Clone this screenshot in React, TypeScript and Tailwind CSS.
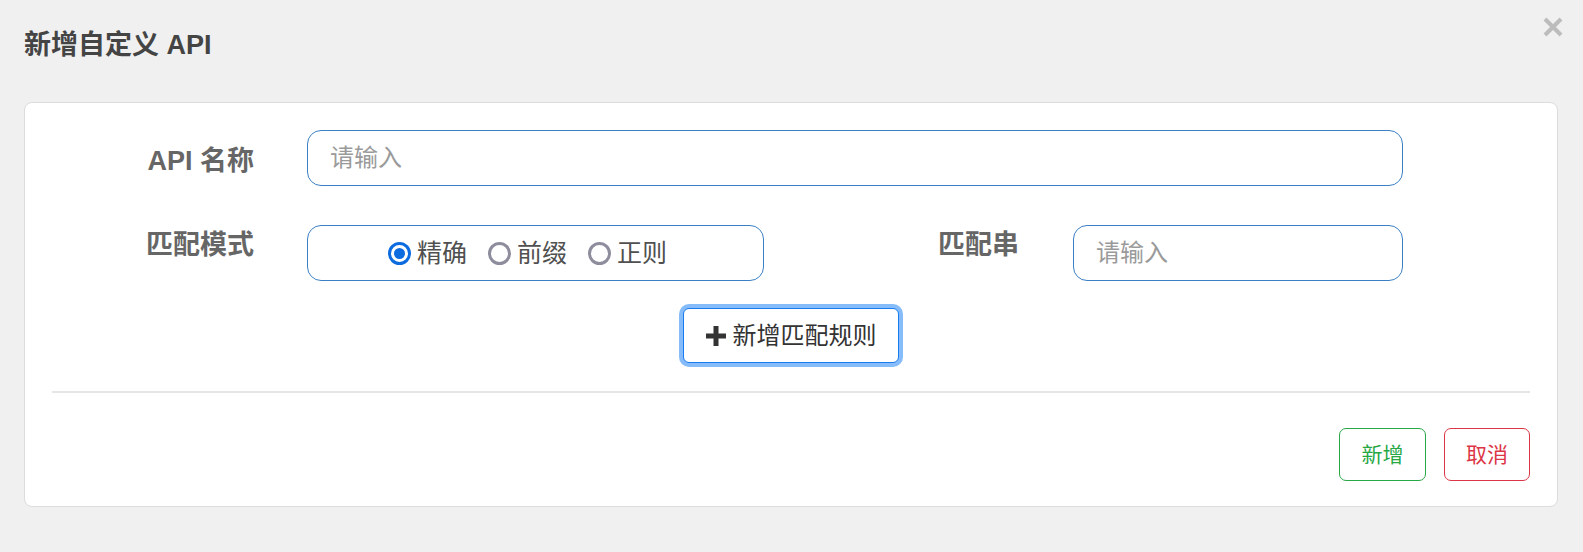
import React from "react";

const cjk = { fontFamily: '"Liberation Sans", "Noto Sans CJK SC", sans-serif' };

function Radio({ checked, label }: { checked?: boolean; label: string }) {
  return (
    <div className="flex items-center">
      <div
        className={
          checked
            ? "w-[23px] h-[23px] rounded-full border-[3px] border-[#0d6be0] flex items-center justify-center"
            : "w-[23px] h-[23px] rounded-full border-[3px] border-[#8e8d9d]"
        }
      >
        {checked && <div className="w-[11px] h-[11px] rounded-full bg-[#0d6be0]" />}
      </div>
      <span className="ml-[6px] text-[25px] leading-[32px] text-[#505050]">{label}</span>
    </div>
  );
}

export default function App() {
  return (
    <div className="relative w-full min-h-[552px] bg-[#f0f0f0]" style={cjk}>
      <div className="h-[102px] pl-[24px] pt-[27px]">
        <h4 className="text-[27px] leading-[37px] font-bold text-[#444]">新增自定义 API</h4>
      </div>
      <div className="absolute right-[20px] top-[17px] w-[20px] h-[20px]">
        <svg width="20" height="20" viewBox="0 0 20 20">
          <path d="M2 2 L18 18 M18 2 L2 18" stroke="#bcbcbc" strokeWidth="4" strokeLinecap="butt" />
        </svg>
      </div>
      <div className="ml-[24px] w-[1534px] bg-white border border-[#dcdcdc] rounded-[8px] px-[27px] pt-[27px] pb-[25px]">
        <div className="flex h-[56px]">
          <div className="w-[255px] pr-[53px] pt-[13px] text-right text-[27px] leading-[36px] font-bold text-[#666]">
            API 名称
          </div>
          <div className="w-[1096px] h-[56px] border border-[#3b7fc4] rounded-[14px] pl-[22px] flex items-center text-[24px] text-[#9a9a9a]">
            请输入
          </div>
        </div>
        <div className="flex h-[56px] mt-[39px]">
          <div className="w-[255px] pr-[53px] pt-[2px] text-right text-[27px] leading-[36px] font-bold text-[#666]">
            匹配模式
          </div>
          <div className="w-[457px] h-[56px] border border-[#3b7fc4] rounded-[14px] pl-[80px] flex items-center gap-[21px]">
            <Radio checked label="精确" />
            <Radio label="前缀" />
            <Radio label="正则" />
          </div>
          <div className="w-[309px] pr-[54px] pt-[2px] text-right text-[27px] leading-[36px] font-bold text-[#666]">
            匹配串
          </div>
          <div className="w-[330px] h-[56px] border border-[#3b7fc4] rounded-[14px] pl-[22px] flex items-center text-[24px] text-[#9a9a9a]">
            请输入
          </div>
        </div>
        <div className="flex justify-center mt-[27px]">
          <button className="w-[216px] h-[55px] border border-[#1a7bf0] rounded-[6px] shadow-[0_0_0_4px_#86bcfa] bg-white flex items-center justify-center text-[24px] text-[#333]">
            <svg width="20" height="20" viewBox="0 0 20 20" className="mr-[7px]">
              <rect x="7.5" y="0" width="5" height="20" fill="#333" />
              <rect x="0" y="7.5" width="20" height="5" fill="#333" />
            </svg>
            新增匹配规则
          </button>
        </div>
        <div className="mt-[28px] h-[2px] bg-[#e5e5e5]" />
        <div className="flex justify-end gap-[18px] mt-[35px]">
          <button className="w-[87px] h-[53px] border border-[#28a745] rounded-[7px] text-[21px] text-[#28a745] bg-white">
            新增
          </button>
          <button className="w-[86px] h-[53px] border border-[#dc3545] rounded-[7px] text-[21px] text-[#dc3545] bg-white">
            取消
          </button>
        </div>
      </div>
    </div>
  );
}
